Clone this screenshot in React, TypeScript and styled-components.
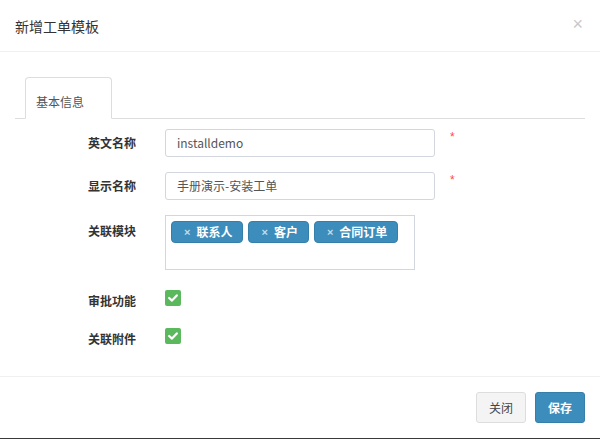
import React from "react";
import styled, { createGlobalStyle } from "styled-components";

const GlobalStyle = createGlobalStyle`
  html, body { margin: 0; padding: 0; background: #fff; }
  body {
    font-family: "Noto Sans CJK SC", "Noto Sans", sans-serif;
    font-size: 12px;
    color: #333;
  }
  * { box-sizing: border-box; }
`;

const Modal = styled.div`
  width: 600px;
  height: 439px;
  display: flex;
  flex-direction: column;
  background: #fff;
  border-bottom: 1px solid #3a3a3a;
`;

const Header = styled.div`
  height: 52px;
  flex: none;
  padding: 0 15px;
  display: flex;
  align-items: center;
  justify-content: space-between;
  border-bottom: 1px solid #f0f0f0;
`;

const Title = styled.h4`
  margin: 0;
  font-size: 14px;
  font-weight: normal;
  color: #333;
  line-height: 20px;
`;

const Close = styled.span`
  font-family: "Liberation Sans", Arial, sans-serif;
  font-size: 18px;
  line-height: 18px;
  color: #c8c8c8;
  margin-right: 2px;
  margin-top: -4px;
`;

const Body = styled.div`
  flex: 1;
  padding: 25px 15px 0;
  border-bottom: 1px solid #f0f0f0;
`;

const TabNav = styled.div`
  display: flex;
  padding-left: 10px;
  border-bottom: 1px solid #ddd;
`;

const Tab = styled.div`
  height: 42px;
  margin-bottom: -1px;
  padding: 16px 27px 0 10px;
  line-height: 16px;
  font-size: 12px;
  color: #555;
  background: #fff;
  border: 1px solid #ddd;
  border-bottom-color: #fff;
  border-radius: 4px 4px 0 0;
`;

const Form = styled.div`
  padding-top: 10px;
  display: flex;
  flex-direction: column;
`;

const Row = styled.div<{ $h?: number; $mb?: number }>`
  display: flex;
  align-items: flex-start;
  height: ${(p) => (p.$h ? `${p.$h}px` : "auto")};
  margin-bottom: ${(p) => (p.$mb !== undefined ? p.$mb : 15)}px;
`;

const Label = styled.div<{ $pt?: number; $lh?: number }>`
  width: 121px;
  margin-right: 29px;
  text-align: right;
  font-weight: bold;
  font-size: 12px;
  color: #333;
  padding-top: ${(p) => p.$pt ?? 0}px;
  line-height: ${(p) => p.$lh ?? 17}px;
`;

const Input = styled.div`
  width: 270px;
  height: 28px;
  border: 1px solid #d2d6de;
  border-radius: 3px;
  padding: 0 11px;
  line-height: 26px;
  font-size: 12px;
  color: #555;
  font-family: "Noto Sans CJK SC", sans-serif;
`;

const Required = styled.span`
  margin-left: 15px;
  color: #ff4a4a;
  font-family: "Liberation Sans", Arial, sans-serif;
  font-size: 12px;
  line-height: 14px;
  padding-top: 1px;
`;

const TagBox = styled.div`
  width: 250px;
  height: 55px;
  border: 1px solid #d2d6de;
  padding: 5px;
  display: flex;
  align-items: flex-start;
  gap: 5px;
`;

const Tag = styled.span`
  display: inline-flex;
  align-items: center;
  height: 22px;
  padding: 0 10px 0 12px;
  background: #3c8dbc;
  border: 1px solid #367fa9;
  border-radius: 4px;
  color: #fff;
  font-weight: bold;
  font-size: 12px;
  line-height: 20px;
`;

const TagX = styled.span`
  font-family: "Liberation Sans", Arial, sans-serif;
  font-size: 11px;
  color: rgba(255, 255, 255, 0.7);
  margin-right: 6px;
`;

const Check = styled.span`
  display: inline-flex;
  align-items: center;
  justify-content: center;
  width: 16px;
  height: 16px;
  margin-top: 5px;
  border-radius: 2px;
  background: #5cb85c;
`;

const Footer = styled.div`
  flex: none;
  height: 61px;
  padding: 15px;
  display: flex;
  justify-content: flex-end;
  gap: 9px;
`;

const Button = styled.button<{ $primary?: boolean }>`
  width: 50px;
  height: 31px;
  padding: 0;
  font-family: "Noto Sans CJK SC", sans-serif;
  font-size: 12px;
  font-weight: ${(p) => (p.$primary ? "bold" : "normal")};
  color: ${(p) => (p.$primary ? "#fff" : "#444")};
  background: ${(p) => (p.$primary ? "#3c8dbc" : "#f4f4f4")};
  border: 1px solid ${(p) => (p.$primary ? "#367fa9" : "#ddd")};
  border-radius: 3px;
`;

const CheckIcon = () => (
  <svg width="10" height="8" viewBox="0 0 10 8">
    <polyline
      points="1.2,4 4,6.6 8.8,1.4"
      fill="none"
      stroke="#fff"
      strokeWidth="2.2"
      strokeLinecap="round"
      strokeLinejoin="round"
    />
  </svg>
);

const tags = ["联系人", "客户", "合同订单"];

export default function App() {
  return (
    <>
      <GlobalStyle />
      <Modal>
        <Header>
          <Title>新增工单模板</Title>
          <Close>×</Close>
        </Header>
        <Body>
          <TabNav>
            <Tab>基本信息</Tab>
          </TabNav>
          <Form>
            <Row>
              <Label $lh={28}>英文名称</Label>
              <Input>installdemo</Input>
              <Required>*</Required>
            </Row>
            <Row>
              <Label $lh={28}>显示名称</Label>
              <Input>手册演示-安装工单</Input>
              <Required>*</Required>
            </Row>
            <Row>
              <Label $pt={7}>关联模块</Label>
              <TagBox>
                {tags.map((t) => (
                  <Tag key={t}>
                    <TagX>×</TagX>
                    {t}
                  </Tag>
                ))}
              </TagBox>
            </Row>
            <Row $h={38} $mb={0}>
              <Label $pt={7}>审批功能</Label>
              <Check>
                <CheckIcon />
              </Check>
            </Row>
            <Row $h={38} $mb={0}>
              <Label $pt={7}>关联附件</Label>
              <Check>
                <CheckIcon />
              </Check>
            </Row>
          </Form>
        </Body>
        <Footer>
          <Button>关闭</Button>
          <Button $primary>保存</Button>
        </Footer>
      </Modal>
    </>
  );
}
